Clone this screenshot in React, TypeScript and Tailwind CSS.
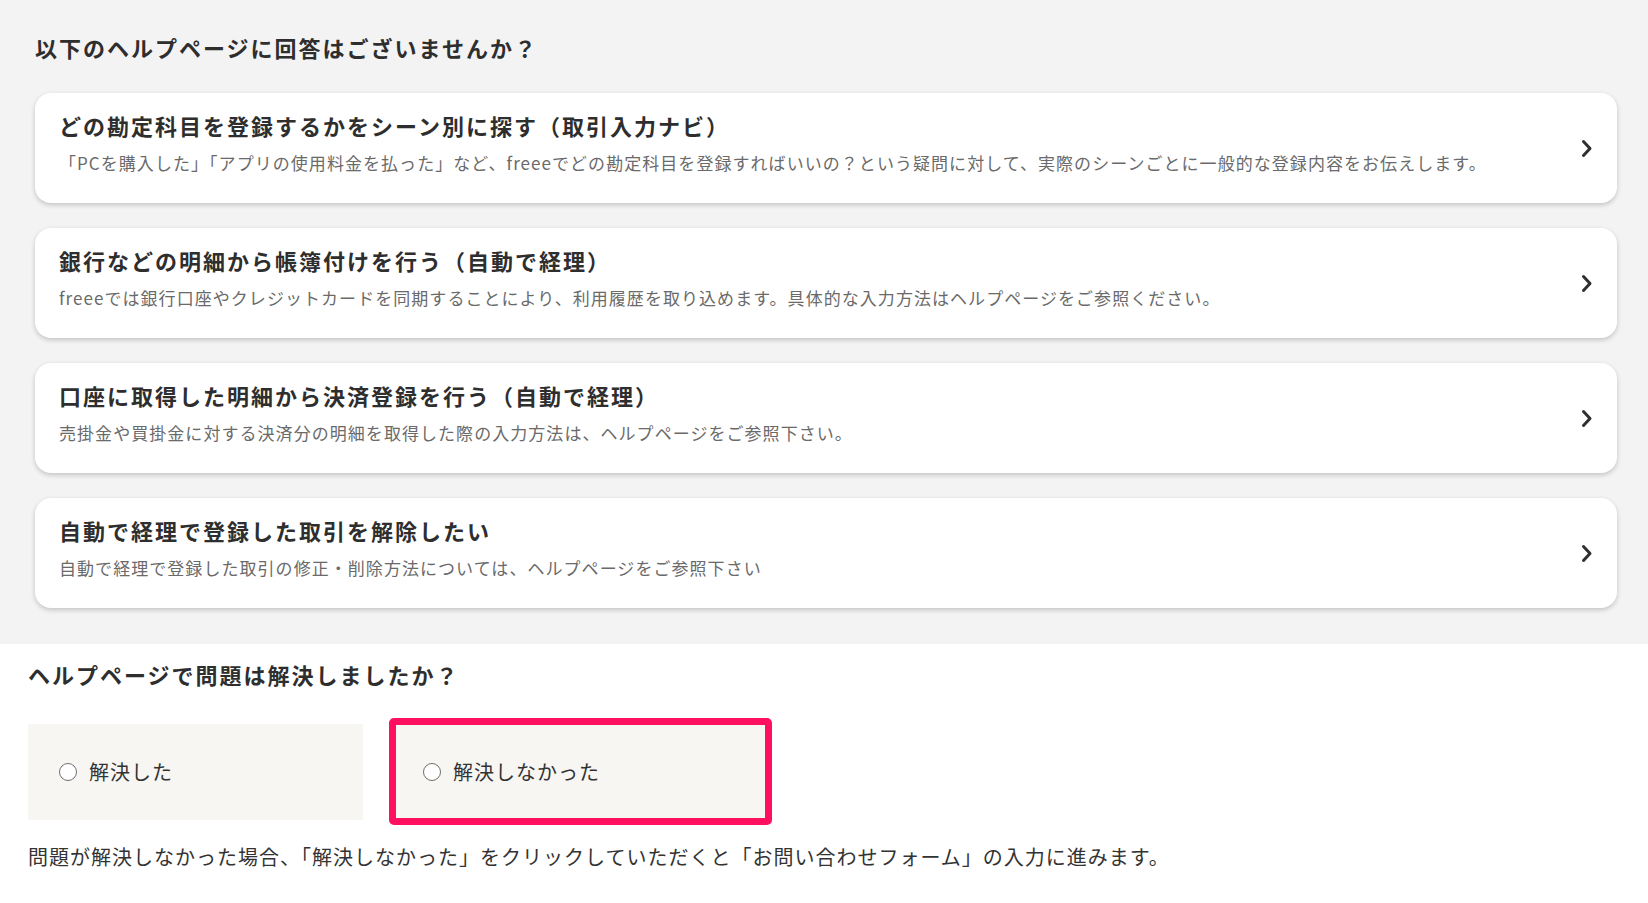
import React from "react";

const cards = [
  {
    title: "どの勘定科目を登録するかをシーン別に探す（取引入力ナビ）",
    desc: "「PCを購入した」「アプリの使用料金を払った」など、freeeでどの勘定科目を登録すればいいの？という疑問に対して、実際のシーンごとに一般的な登録内容をお伝えします。",
  },
  {
    title: "銀行などの明細から帳簿付けを行う（自動で経理）",
    desc: "freeeでは銀行口座やクレジットカードを同期することにより、利用履歴を取り込めます。具体的な入力方法はヘルプページをご参照ください。",
  },
  {
    title: "口座に取得した明細から決済登録を行う（自動で経理）",
    desc: "売掛金や買掛金に対する決済分の明細を取得した際の入力方法は、ヘルプページをご参照下さい。",
  },
  {
    title: "自動で経理で登録した取引を解除したい",
    desc: "自動で経理で登録した取引の修正・削除方法については、ヘルプページをご参照下さい",
  },
];

function Chevron() {
  return (
    <svg width="12" height="19" viewBox="0 0 12 19" className="shrink-0">
      <path d="M2.5 2.5 L9 9.5 L2.5 16.5" fill="none" stroke="#2f2f2f" strokeWidth="3" strokeLinecap="round" strokeLinejoin="round" />
    </svg>
  );
}

function Radio() {
  return <span className="inline-block w-[18px] h-[18px] rounded-full border-[1.5px] border-[#6f6f6f] bg-white shrink-0" />;
}

export default function App() {
  return (
    <div
      className="min-h-screen bg-white text-[#333]"
      style={{ fontFamily: '"Noto Sans CJK JP", "Noto Sans", sans-serif' }}
    >
      <section className="bg-[#f4f3f4] pt-[33px] pb-[36px] pl-[35px] pr-[31px]">
        <h2 className="text-[22px] leading-[28px] font-bold tracking-[2px] text-[#2e2e2e] mb-[32px]">
          以下のヘルプページに回答はございませんか？
        </h2>
        <div className="flex flex-col gap-[25px]">
          {cards.map((c) => (
            <div
              key={c.title}
              className="h-[110px] bg-white rounded-[16px] shadow-[0_2px_5px_rgba(0,0,0,0.2)] flex items-center justify-between px-[24px]"
            >
              <div className="self-stretch pt-[17px]">
                <div className="text-[22px] leading-[30px] font-bold tracking-[2px] text-[#2e2e2e] whitespace-nowrap">
                  {c.title}
                </div>
                <div className="mt-[11px] text-[17px] leading-[24px] tracking-[1.05px] text-[#6a6a6a] whitespace-nowrap">
                  {c.desc}
                </div>
              </div>
              <Chevron />
            </div>
          ))}
        </div>
      </section>
      <section className="pt-[16px] pl-[28px] pb-[40px]">
        <h2 className="text-[22px] leading-[28px] font-bold tracking-[2px] text-[#2e2e2e]">
          ヘルプページで問題は解決しましたか？
        </h2>
        <div className="mt-[30px] flex items-center gap-[26px] h-[107px]">
          <div className="w-[335px] h-[96px] bg-[#f7f6f3] flex items-center pl-[31px] gap-[12px]">
            <Radio />
            <span className="text-[20px] leading-[28px] tracking-[1px] text-[#333]">解決した</span>
          </div>
          <div className="w-[383px] h-[107px] bg-[#f7f6f3] border-[7px] border-[#ff1060] rounded-[5px] flex items-center pl-[27px] gap-[12px]">
            <Radio />
            <span className="text-[20px] leading-[28px] tracking-[1px] text-[#333]">解決しなかった</span>
          </div>
        </div>
        <p className="mt-[17px] text-[20px] leading-[30px] tracking-[1px] text-[#333] whitespace-nowrap">
          問題が解決しなかった場合、「解決しなかった」をクリックしていただくと「お問い合わせフォーム」の入力に進みます。
        </p>
      </section>
    </div>
  );
}
